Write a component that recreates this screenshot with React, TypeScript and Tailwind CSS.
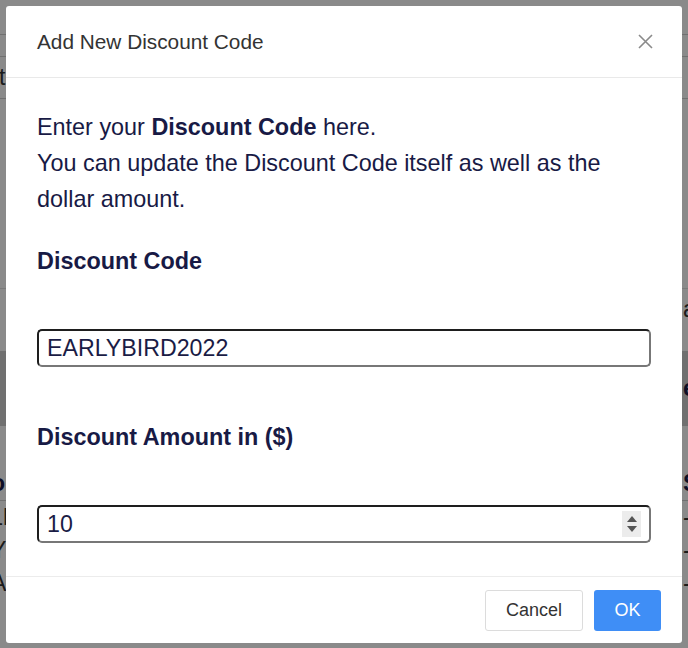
import React from "react";

const font = { fontFamily: '"Liberation Sans", Arial, Helvetica, sans-serif' };

const Backdrop = () => {
  return (
    <div className="w-[688px] h-[648px] bg-white text-[#181a45] text-[23px] overflow-hidden">
      <div className="h-[35px] border-b border-[#cfcfcf]"></div>
      <div className="h-[22px] border-b border-[#cfcfcf]"></div>
      <div className="h-[42px] border-b border-[#cfcfcf] flex items-center">
        <span className="-ml-[6px] text-[#333]">it</span>
      </div>
      <div className="h-[190px] border-b border-[#e2e2e2]"></div>
      <div className="h-[40px] flex items-center justify-end">
        <span className="w-[5px] overflow-hidden text-[#333]">a</span>
      </div>
      <div className="h-[22px]"></div>
      <div className="h-[75px] bg-[#cfcfcf] flex items-center justify-end">
        <span className="w-[5px] overflow-hidden font-bold">e</span>
      </div>
      <div className="h-[40px]"></div>
      <div className="h-[35px] border-b border-[#cfcfcf] flex items-center justify-between">
        <span className="-ml-[9px] font-bold">o</span>
        <span className="w-[5px] overflow-hidden font-bold">S</span>
      </div>
      <div className="h-[33px] flex items-center justify-between text-[#333]">
        <span className="-ml-[10px]">LD</span>
        <span className="w-[5px] overflow-hidden">-</span>
      </div>
      <div className="h-[33px] flex items-center justify-between text-[#333]">
        <span className="-ml-[9px]">Y</span>
        <span className="w-[5px] overflow-hidden">-</span>
      </div>
      <div className="h-[33px] flex items-center justify-between text-[#333]">
        <span className="-ml-[9px]">A</span>
        <span className="w-[5px] overflow-hidden">-</span>
      </div>
    </div>
  );
};

const Spinner = () => {
  return (
    <div className="w-[19px] h-[26px] bg-[#ececec] flex flex-col items-center justify-center gap-[4px] mr-[8px]">
      <svg width="10" height="6" viewBox="0 0 10 6">
        <path d="M5 0 L10 6 L0 6 Z" fill="#555" />
      </svg>
      <svg width="10" height="6" viewBox="0 0 10 6">
        <path d="M0 0 L10 0 L5 6 Z" fill="#555" />
      </svg>
    </div>
  );
};

export default function App() {
  return (
    <div className="relative w-[688px] h-[648px] overflow-hidden" style={font}>
      <Backdrop />
      <div className="absolute inset-0 bg-black/[0.46]"></div>

      <div className="absolute left-[6px] top-[6px] w-[676px] h-[637px] bg-white rounded-[3px] flex flex-col">
        <div className="h-[72px] border-b border-[#e9e9e9] flex items-center justify-between pl-[31px] pr-[29px]">
          <h2 className="text-[20.8px] text-[#333]">Add New Discount Code</h2>
          <svg width="15" height="15" viewBox="0 0 15 15">
            <path d="M1 1 L14 14 M14 1 L1 14" stroke="#8a8a8a" strokeWidth="1.6" />
          </svg>
        </div>

        <div className="flex-1 px-[31px] pt-[31px] text-[23.4px] leading-[36px] text-[#181a45]">
          <p>
            Enter your <b>Discount Code</b> here.
            <br />
            You can update the Discount Code itself as well as the dollar
            amount.
          </p>

          <p className="mt-[26px] font-bold">Discount Code</p>
          <div className="mt-[50px] h-[38px] rounded-[5px] border-2 border-[#1e1e1e] border-r-[#777] border-b-[#777] flex items-center">
            <input
              readOnly
              value="EARLYBIRD2022"
              className="flex-1 min-w-0 pl-[8px] bg-transparent outline-none text-[23.2px] text-[#1a1c45]"
            />
          </div>

          <p className="mt-[52px] font-bold">Discount Amount in ($)</p>
          <div className="mt-[50px] h-[38px] rounded-[5px] border-2 border-[#1e1e1e] border-r-[#777] border-b-[#777] flex items-center">
            <input
              readOnly
              value="10"
              className="flex-1 min-w-0 pl-[8px] bg-transparent outline-none text-[23.2px] text-[#1a1c45]"
            />
            <Spinner />
          </div>
        </div>

        <div className="h-[67px] border-t border-[#ececec] flex items-start justify-end gap-[11px] pt-[13px] pr-[21px]">
          <button className="w-[98px] h-[41px] rounded-[3px] border border-[#dcdcdc] bg-white text-[18px] text-[#333]">
            Cancel
          </button>
          <button className="w-[67px] h-[41px] rounded-[3px] bg-[#3f8ef6] text-[18px] text-white">
            OK
          </button>
        </div>
      </div>
    </div>
  );
}
